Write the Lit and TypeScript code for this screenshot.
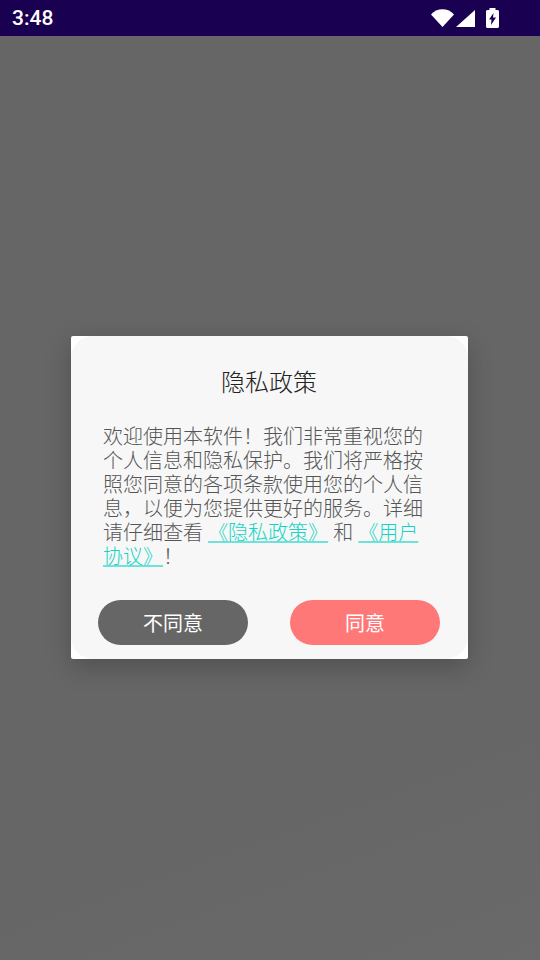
import { LitElement, html, css } from "lit";
import { customElement } from "lit/decorators.js";

@customElement("app-root")
export class AppRoot extends LitElement {
  static styles = css`
    :host {
      display: flex;
      flex-direction: column;
      width: 540px;
      height: 960px;
      overflow: hidden;
      background: linear-gradient(160deg, #666666 80%, #6a6a6a 100%);
      font-family: "Noto Sans CJK SC", "Noto Sans", sans-serif;
    }
    .status {
      flex: none;
      height: 36px;
      background: #1a0050;
      display: flex;
      align-items: center;
      justify-content: space-between;
      padding: 0 41px 0 12px;
      color: #fff;
    }
    .time {
      font-family: Roboto, sans-serif;
      font-weight: 500;
      font-size: 21px;
    }
    .icons {
      display: flex;
      align-items: center;
    }
    .icons svg {
      display: block;
      fill: #fff;
    }
    .wifi {
      margin-right: 2px;
    }
    .signal {
      margin-right: 11px;
    }
    .main {
      flex: 1;
      display: flex;
      align-items: center;
      justify-content: center;
    }
    .dialog {
      width: 397px;
      height: 323px;
      margin: 0 1px 1px 0;
      background: #fff;
      border-radius: 2px;
      box-shadow: 0 8px 26px rgba(0, 0, 0, 0.22);
    }
    .inner {
      box-sizing: border-box;
      height: 100%;
      background: #f7f7f7;
      border-radius: 22px;
      display: flex;
      flex-direction: column;
      padding: 27px 28px 14px 27px;
    }
    h1 {
      margin: 0;
      font-size: 24px;
      line-height: 36px;
      font-weight: 300;
      color: #222;
      text-align: center;
    }
    p {
      margin: 25px 0 0 5px;
      width: 330px;
      font-size: 20px;
      line-height: 24px;
      font-weight: 300;
      color: #555;
      word-spacing: 0.7px;
    }
    a {
      color: #14d4c4;
      text-decoration: underline;
      text-decoration-color: #6fe3da;
      text-decoration-thickness: 1.5px;
    }
    .actions {
      margin-top: auto;
      display: flex;
      justify-content: space-between;
    }
    button {
      width: 150px;
      height: 45px;
      border: none;
      border-radius: 23px;
      padding: 0;
      color: #fff;
      font: inherit;
      font-size: 20px;
      font-weight: 400;
    }
    .no {
      background: #666;
    }
    .yes {
      background: #ff7878;
    }
  `;

  render() {
    return html`
      <div class="status">
        <span class="time">3:48</span>
        <div class="icons">
          <svg class="wifi" width="23" height="18" viewBox="0 0 23 18"><path d="M0 5.500C3 2.200 7 .3 11.500 .3S20 2.200 23 5.500L11.500 18z"/></svg>
          <svg class="signal" width="19" height="17" viewBox="0 0 19 17"><path d="M0 17L19 0V17z"/></svg>
          <svg width="13" height="20" viewBox="0 0 13 20"><path fill-rule="evenodd" d="M3.500 0h6v2h2c.8 0 1.500.7 1.500 1.500V18.500c0 .8-.7 1.500-1.500 1.500h-10C.7 20 0 19.300 0 18.500V3.500C0 2.700.7 2 1.500 2h2zM7.500 5L3 11.500h2.500L5 17l5-7.500H7z"/></svg>
        </div>
      </div>
      <div class="main">
        <div class="dialog">
          <div class="inner">
            <h1>隐私政策</h1>
            <p>欢迎使用本软件&#xFF01;我们非常重视您的个人信息和隐私保护。我们将严格按照您同意的各项条款使用您的个人信息&#xFF0C;以便为您提供更好的服务。详细请仔细查看 <a>《隐私政策》</a> 和 <a>《用户协议》</a>&#xFF01;</p>
            <div class="actions">
              <button class="no">不同意</button>
              <button class="yes">同意</button>
            </div>
          </div>
        </div>
      </div>
    `;
  }
}
